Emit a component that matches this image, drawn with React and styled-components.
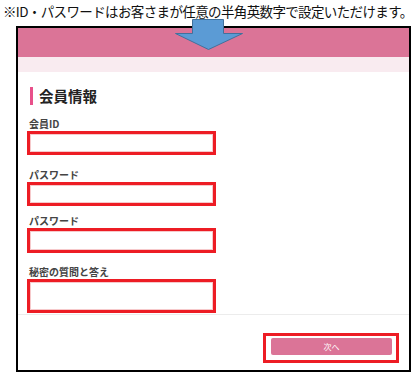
import styled, { createGlobalStyle } from "styled-components";

const GlobalStyle = createGlobalStyle`
  html, body {
    margin: 0;
    padding: 0;
    background: #fff;
  }
  body {
    font-family: "Noto Sans CJK JP", "Noto Sans", sans-serif;
  }
`;

const Page = styled.div`
  position: relative;
  width: 415px;
  height: 375px;
  overflow: hidden;
`;

const Notice = styled.p`
  margin: 0;
  padding-left: 3px;
  height: 26px;
  line-height: 22px;
  font-size: 13.5px;
  letter-spacing: -0.63px;
  color: #111;
  white-space: nowrap;
`;

const Frame = styled.div`
  margin-left: 16px;
  width: 395px;
  height: 346px;
  box-sizing: border-box;
  border: 2px solid #000;
  display: flex;
  flex-direction: column;
`;

const Band = styled.div`
  height: ${(p) => p.$h}px;
  background: ${(p) => p.$bg};
  flex-shrink: 0;
`;

const Body = styled.div`
  padding: 15px 0 0 9px;
`;

const Heading = styled.h2`
  margin: 0 0 12px 3px;
  padding-left: 6px;
  border-left: 3px solid #e8508a;
  height: 18px;
  line-height: 18px;
  font-size: 14.5px;
  font-weight: 700;
  color: #222;
`;

const Field = styled.div`
  margin-top: ${(p) => p.$gap}px;
`;

const Label = styled.div`
  margin: 0 0 2px 2px;
  height: 12px;
  line-height: 13px;
  font-size: 10px;
  font-weight: 700;
  color: #444;
`;

const InputBox = styled.div`
  width: 189px;
  height: ${(p) => p.$h}px;
  box-sizing: border-box;
  border: 3px solid #ed1c24;
  box-shadow: inset 0 0 0 1px #f6c9cb;
  background: #fff;
`;

const Footer = styled.div`
  flex: 1;
  margin-top: 1px;
  border-top: 1px solid #ececec;
  display: flex;
  justify-content: flex-end;
  align-items: flex-start;
  padding: 18px 10px 0 0;
`;

const Mark = styled.div`
  width: 136px;
  height: 30px;
  box-sizing: border-box;
  border: 3px solid #ed1c24;
  padding: 2px 4px 5px 5px;
`;

const NextButton = styled.button`
  display: block;
  width: 100%;
  height: 17px;
  border: none;
  border-radius: 2px;
  background: #db7497;
  color: #fff;
  font-family: inherit;
  font-size: 8px;
  line-height: 17px;
  padding: 0;
`;

const Arrow = styled.svg`
  position: absolute;
  left: 175px;
  top: 19px;
`;

const fields = [
  { label: "会員ID", gap: 0, h: 24 },
  { label: "パスワード", gap: 13, h: 24 },
  { label: "パスワード", gap: 8, h: 25 },
  { label: "秘密の質問と答え", gap: 12, h: 34 },
];

export default function App() {
  return (
    <Page>
      <GlobalStyle />
      <Notice>※ID・パスワードはお客さまが任意の半角英数字で設定いただけます。</Notice>
      <Frame>
        <Band $h={29} $bg="#db7497" />
        <Band $h={15} $bg="#f9ebf0" />
        <Body>
          <Heading>会員情報</Heading>
          {fields.map((f, i) => (
            <Field key={i} $gap={f.gap}>
              <Label>{f.label}</Label>
              <InputBox $h={f.h} />
            </Field>
          ))}
        </Body>
        <Footer>
          <Mark>
            <NextButton>次へ</NextButton>
          </Mark>
        </Footer>
      </Frame>
      <Arrow width="68" height="32" viewBox="0 0 68 32">
        <polygon
          points="17.5,0.5 48.5,0.5 48.5,14.5 67.5,14.5 33.5,30.5 0.5,14.5 17.5,14.5"
          fill="#5b9bd5"
          stroke="#41719c"
          strokeWidth="1"
        />
      </Arrow>
    </Page>
  );
}
